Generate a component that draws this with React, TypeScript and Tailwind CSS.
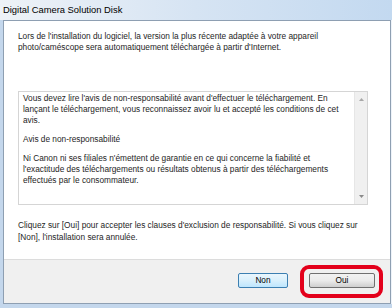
import React from "react";

const font = { fontFamily: '"Liberation Sans", Arial, sans-serif' };

export default function App() {
  return (
    <div
      className="relative w-[392px] h-[308px] overflow-hidden bg-[#c4d7ec] flex flex-col"
      style={font}
    >
      {/* Title bar */}
      <div className="h-[20px] shrink-0 flex items-center pl-[3px] bg-gradient-to-r from-[#eef2f7] via-[#d6e4f3] to-[#c3d9f0]">
        <span className="text-[9.4px] text-black leading-none">Digital Camera Solution Disk</span>
      </div>
      {/* Body */}
      <div className="flex flex-1 min-h-0">
        <div className="w-[3px] shrink-0 bg-[#c4d7ec]" />
        <div className="flex-1 flex flex-col border border-[#8e9fb2] bg-white">
          <div className="h-[238px] shrink-0 bg-white flex flex-col pl-[14px] pr-[22px] pt-[10px] text-[8.3px] text-[#1e1e1e] whitespace-nowrap">
            <p className="leading-[11px]">
              Lors de l'installation du logiciel, la version la plus récente adaptée à votre appareil
              <br />
              photo/caméscope sera automatiquement téléchargée à partir d'Internet.
            </p>
            <div className="mt-[38px] h-[114px] border border-[#d5d5d5] flex">
              <div className="flex-1 pl-[4px] pt-[1px] leading-[11px] overflow-hidden">
                <p>
                  Vous devez lire l'avis de non-responsabilité avant d'effectuer le téléchargement. En
                  <br />
                  lançant le téléchargement, vous reconnaissez avoir lu et accepté les conditions de cet
                  <br />
                  avis.
                </p>
                <p className="mt-[8px]">Avis de non-responsabilité</p>
                <p className="mt-[8px]">
                  Ni Canon ni ses filiales n'émettent de garantie en ce qui concerne la fiabilité et
                  <br />
                  l'exactitude des téléchargements ou résultats obtenus à partir des téléchargements
                  <br />
                  effectués par le consommateur.
                </p>
              </div>
              <div className="w-[13px] shrink-0 bg-[#f0f0f0] border-l border-[#e6e6e6] flex flex-col items-center justify-between py-[6px]">
                <svg width="5" height="3" viewBox="0 0 5 3">
                  <path d="M0 3 L2.5 0 L5 3 Z" fill="#a8a8a8" />
                </svg>
                <svg width="5" height="3" viewBox="0 0 5 3">
                  <path d="M0 0 L2.5 3 L5 0 Z" fill="#8a8a8a" />
                </svg>
              </div>
            </div>
            <p className="mt-[14px] leading-[12px]">
              Cliquez sur [Oui] pour accepter les clauses d'exclusion de responsabilité. Si vous cliquez sur
              <br />
              [Non], l'installation sera annulée.
            </p>
          </div>
          <div className="flex-1 bg-[#f0f0f0] border-t border-[#dcdcdc] flex items-start justify-end pt-[13px] pr-[15px] gap-[21px]">
            <button className="w-[50px] h-[15px] rounded-[2px] border border-[#3c7fb1] bg-gradient-to-b from-[#eaf6fd] via-[#d9f0fc] to-[#bee6fd] text-[8.3px] text-black leading-none flex items-center justify-center">
              Non
            </button>
            <button className="w-[66px] h-[15px] rounded-[2px] border border-[#707070] bg-gradient-to-b from-[#f2f2f2] via-[#ebebeb] to-[#cfcfcf] text-[8.3px] text-black leading-none flex items-center justify-center">
              Oui
            </button>
          </div>
        </div>
        <div className="w-[1px] shrink-0 bg-[#eef3f9]" />
      </div>
      <div className="h-[4px] shrink-0 bg-[#c4d7ec]" />
      {/* Red highlight ring */}
      <div className="absolute left-[300px] top-[265px] w-[83px] h-[33px] rounded-[9px] border-[4px] border-[#e3001b]" />
    </div>
  );
}
